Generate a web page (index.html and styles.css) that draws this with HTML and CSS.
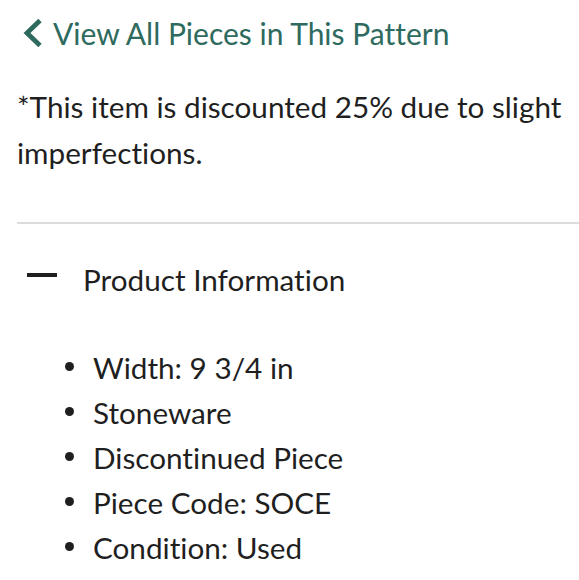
FILE: index.html
```html
<!DOCTYPE html>
<html lang="en">
<head>
<meta charset="utf-8">
<title>Product</title>
<link rel="stylesheet" href="styles.css">
</head>
<body>
<div class="page">
  <a class="back" href="#">
    <svg class="chev" width="20" height="30" viewBox="0 0 20 30" aria-hidden="true">
      <polyline points="17,2.5 4,15 17,27.5" fill="none" stroke="currentColor" stroke-width="4.8"/>
    </svg>
    <span>View All Pieces in This Pattern</span>
  </a>
  <p class="note">*This item is discounted 25% due to slight imperfections.</p>
  <hr class="divider">
  <section class="acc">
    <div class="acc-head">
      <span class="minus"></span>
      <span class="acc-title">Product Information</span>
    </div>
    <ul class="specs">
      <li>Width: 9 3/4 in</li>
      <li>Stoneware</li>
      <li>Discontinued Piece</li>
      <li>Piece Code: SOCE</li>
      <li>Condition: Used</li>
    </ul>
  </section>
</div>
</body>
</html>
```
FILE: styles.css
```css
html, body {
  margin: 0;
  padding: 0;
  background: #fff;
}
body {
  font-family: Lato, "Open Sans", sans-serif;
  color: #1f1f1f;
  overflow: hidden;
  font-variant-ligatures: none;
}
.page {
  padding: 15px 0 0 17px;
}
.back {
  display: flex;
  align-items: center;
  gap: 10px;
  color: #2e6b5e;
  text-decoration: none;
  font-size: 30px;
  line-height: 36px;
  padding-left: 6px;
}
.chev {
  display: block;
  flex: none;
}
.note {
  margin: 33px 0 0;
  font-size: 29.7px;
  line-height: 46px;
  padding-right: 4px;
}
.divider {
  margin: 46px 0 0;
  border: 0;
  height: 2px;
  background: #dcdcdc;
}
.acc {
  margin-top: 33px;
}
.acc-head {
  display: flex;
  align-items: center;
  font-size: 29.7px;
  line-height: 46px;
}
.minus {
  display: block;
  width: 30px;
  height: 4px;
  background: #1f1f1f;
  margin: -10px 26px 0 10px;
}
.specs {
  list-style: none;
  margin: 42px 0 0;
  padding: 0 0 0 48px;
  font-size: 29.7px;
  line-height: 45px;
}
.specs li {
  display: flex;
  align-items: center;
}
.specs li::before {
  content: "";
  flex: none;
  width: 9px;
  height: 9px;
  border-radius: 50%;
  background: #1f1f1f;
  margin: -3px 19px 0 0;
}
```
